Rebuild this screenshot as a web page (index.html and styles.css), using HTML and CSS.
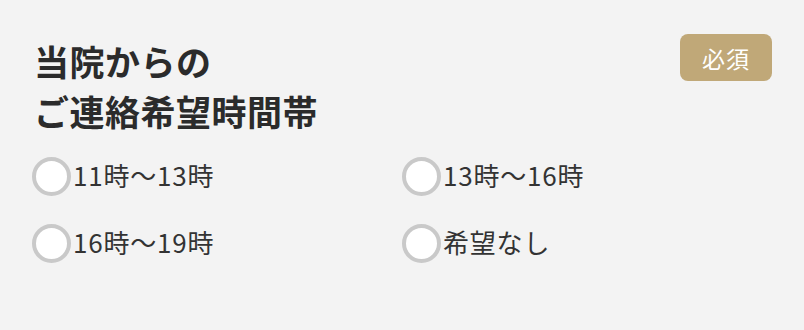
FILE: index.html
```html
<!DOCTYPE html>
<html lang="ja">
<head>
<meta charset="utf-8">
<link rel="stylesheet" href="styles.css">
</head>
<body>
<section class="field">
  <div class="field-head">
    <h2 class="field-title">当院からの<br>ご連絡希望時間帯</h2>
    <span class="badge">必須</span>
  </div>
  <div class="options">
    <label class="option"><span class="radio"></span><span class="option-text">11時〜13時</span></label>
    <label class="option"><span class="radio"></span><span class="option-text">13時〜16時</span></label>
    <label class="option"><span class="radio"></span><span class="option-text">16時〜19時</span></label>
    <label class="option"><span class="radio"></span><span class="option-text">希望なし</span></label>
  </div>
</section>
</body>
</html>
```

FILE: styles.css
```css
html, body {
  margin: 0;
  padding: 0;
  background: #f3f3f3;
}
body {
  font-family: "Noto Sans CJK JP", "Noto Sans", sans-serif;
  color: #333333;
}
.field {
  padding: 34px 32px 0 32px;
}
.field-head {
  display: flex;
  justify-content: space-between;
  align-items: flex-start;
}
.field-title {
  margin: 2px 0 0 2px;
  font-size: 35px;
  line-height: 50px;
  font-weight: 700;
  letter-spacing: 0.5px;
  color: #2b2b2b;
}
.badge {
  display: flex;
  align-items: center;
  justify-content: center;
  width: 92px;
  height: 47px;
  border-radius: 8px;
  background: #c0a878;
  color: #ffffff;
  font-size: 23px;
  letter-spacing: 1px;
}
.options {
  display: grid;
  grid-template-columns: 1fr 1fr;
  row-gap: 27px;
  margin-top: 20px;
}
.option {
  display: flex;
  align-items: center;
  gap: 2px;
  height: 40px;
}
.radio {
  box-sizing: border-box;
  width: 39px;
  height: 39px;
  border-radius: 50%;
  border: 4px solid #c9c9c9;
  background: #ffffff;
  flex: none;
}
.option-text {
  font-size: 26px;
  letter-spacing: 0.8px;
  padding-bottom: 4px;
  color: #333333;
}
```
